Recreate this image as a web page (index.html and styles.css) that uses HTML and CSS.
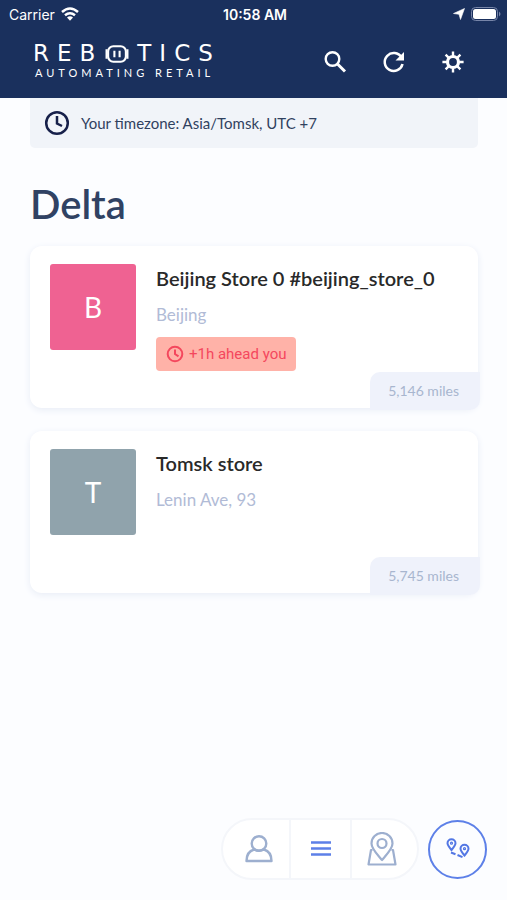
FILE: index.html
```html
<!DOCTYPE html>
<html lang="en">
<head>
<meta charset="utf-8">
<meta name="viewport" content="width=device-width, initial-scale=1">
<title>Rebotics stores</title>
<link rel="stylesheet" href="styles.css">
</head>
<body>
<header class="header">
  <div class="status">
    <div class="status-side">
      <span>Carrier</span>
      <svg width="18" height="14" viewBox="0 0 18 14" fill="none" stroke="#fff" stroke-width="2.5"><path d="M1 5q8-7 16 0M4 8.3q5-4.2 10 0"/><path d="M6 10.5q3-2.6 6 0l-3 3.2z" fill="#fff" stroke="none"/></svg>
    </div>
    <time class="status-time">10:58 AM</time>
    <div class="status-side status-end">
      <svg width="12" height="12" viewBox="0 0 12 12" fill="#fff"><path d="M11.500.5 7.500 11.500 6 6.300.5 5.500z" stroke="#fff" stroke-width=".6"/></svg>
      <svg width="30" height="14" viewBox="0 0 30 14"><rect x=".5" y=".5" width="26" height="13" rx="4" fill="none" stroke="#7785a8"/><rect x="2" y="2" width="23" height="10" rx="2.500" fill="#fff"/><path d="M28 4.500q3 2.500 0 5z" fill="#7785a8"/></svg>
    </div>
  </div>
  <div class="toolbar">
    <div class="logo">
      <div class="wordmark"><span>REB</span><svg width="24" height="18" viewBox="0 0 23 17" fill="none" stroke="#fff" stroke-width="2"><rect x="3" y="1" width="17" height="15" rx="5"/><path d="M1.500 4v9M21.500 4v9M9 5.500v6M14 5.500v6" stroke-width="2"/></svg><span>TICS</span></div>
      <div class="tagline">AUTOMATING RETAIL</div>
    </div>
    <div class="actions">
      <button class="icon-button" aria-label="Search"><svg width="24" height="24" viewBox="0 0 24 24" fill="none" stroke="#fff" stroke-width="2.400"><circle cx="9.500" cy="9" r="6.800"/><path d="m14.500 14 7.500 7.500" stroke-width="3"/></svg></button>
      <button class="icon-button" aria-label="Refresh"><svg width="24" height="24" viewBox="0 0 24 24"><path d="M19.500 7.500A9 9 0 1 0 20.500 14" fill="none" stroke="#fff" stroke-width="2.500"/><path d="M22 2v8.500h-8.500z" fill="#fff"/></svg></button>
      <button class="icon-button" aria-label="Settings"><svg width="24" height="24" viewBox="0 0 24 24" fill="none" stroke="#fff"><circle cx="12" cy="12" r="5.500" stroke-width="3.200"/><path d="M18 12h4.600M1.400 12H6M16.200 16.200l3.200 3.200M4.600 4.600l3.200 3.200M7.800 16.200l-3.200 3.200M19.400 4.600l-3.200 3.200M12 1.400V6M12 18v4.600" stroke-width="2.400"/></svg></button>
    </div>
  </div>
</header>
<main class="content">
  <div class="timezone">
    <svg width="26" height="26" viewBox="0 0 26 26" fill="none" stroke="#17204a" stroke-width="2.500"><circle cx="13" cy="13" r="10.800"/><path d="M13 6v7.500l5 2.500"/></svg>
    <span>Your timezone: Asia/Tomsk, UTC +7</span>
  </div>
  <h1 class="title">Delta</h1>
  <div class="stores">
    <article class="card">
      <div class="avatar avatar-pink">B</div>
      <div class="details">
        <h2 class="name">Beijing Store 0 #beijing_store_0</h2>
        <p class="address">Beijing</p>
        <div class="offset">
          <svg width="18" height="18" viewBox="0 0 18 18" fill="none" stroke="#f4475d" stroke-width="2"><circle cx="9" cy="9" r="7.300"/><path d="M9 4.500V9l3.500 2.300"/></svg>
          <span>+1h ahead you</span>
        </div>
      </div>
      <div class="distance">5,146 miles</div>
    </article>
    <article class="card">
      <div class="avatar avatar-gray">T</div>
      <div class="details">
        <h2 class="name">Tomsk store</h2>
        <p class="address">Lenin Ave, 93</p>
      </div>
      <div class="distance">5,745 miles</div>
    </article>
  </div>
</main>
<footer class="footer">
  <nav class="tabs">
    <button class="tab tab-first" aria-label="Profile"><svg width="30" height="30" viewBox="0 0 30 30" fill="none" stroke="#9dafcf" stroke-width="2.400" stroke-linejoin="round"><circle cx="15" cy="9.500" r="7.300"/><path d="M10 15.500C5 17 2.500 21 2.500 27h25c0-6-2.500-10-7.500-11.500Q15 18 10 15.500"/></svg></button>
    <button class="tab" aria-label="List"><svg width="20" height="18" viewBox="0 0 20 18" stroke="#5d80e8" stroke-width="2.500"><path d="M0 2.500h20M0 8.500h20M0 14.500h20"/></svg></button>
    <button class="tab tab-last" aria-label="Map"><svg width="30" height="34" viewBox="0 0 30 34" fill="none" stroke="#9dafcf" stroke-width="2.200" stroke-linejoin="round"><path d="M15 28C10 22 4.500 17 4.500 11.500a10.500 10.500 0 0 1 21 0C25.500 17 20 22 15 28z"/><circle cx="15" cy="11.500" r="4.500"/><path d="M5.500 18H4L1.500 32.500h27L26 18h-1.500"/></svg></button>
  </nav>
  <button class="route" aria-label="Route"><svg width="24" height="22" viewBox="0 0 24 22" fill="none" stroke="#5377e4" stroke-width="2"><path d="M5.500 12C3 9 1.500 7.200 1.500 5.200a4 4 0 0 1 8 0C9.500 7.200 8 9 5.500 12z"/><circle cx="5.500" cy="5.200" r="1" stroke-width="1.200"/><path d="M18.500 17.500C16 14.500 14.500 12.700 14.500 10.700a4 4 0 0 1 8 0C22.500 12.700 21 14.500 18.500 17.500z"/><circle cx="18.500" cy="10.700" r="1" stroke-width="1.200"/><path d="m5 14.500 4.500 1.700M11.500 17l5 2.200"/></svg></button>
</footer>
</body>
</html>
```

FILE: styles.css
```css
* { box-sizing: border-box; }

body {
  margin: 0;
  min-height: 100vh;
  display: flex;
  flex-direction: column;
  background: #fcfdff;
  font-family: Lato, "Open Sans", sans-serif;
  color: #30415f;
}

h1, h2, p { margin: 0; font-weight: inherit; }

button {
  padding: 0;
  border: 0;
  background: none;
  display: flex;
  align-items: center;
  justify-content: center;
}

svg { display: block; flex: none; }

.header {
  padding-bottom: 12px;
  background: #1a305d;
  color: #fff;
}

.status {
  display: flex;
  align-items: center;
  height: 28px;
  padding: 0 6px 0 9px;
  font-family: Inter, sans-serif;
  font-size: 14px;
}

.status-side {
  flex: 1;
  display: flex;
  align-items: center;
  gap: 6px;
}

.status-end { justify-content: flex-end; }
.status-time { font-weight: 600; }

.toolbar {
  display: flex;
  align-items: center;
  justify-content: space-between;
  height: 58px;
  padding: 0 42px 0 33px;
}

.actions {
  display: flex;
  align-items: center;
  gap: 35px;
  padding-top: 9px;
}

.logo { padding-top: 11px; }

.wordmark {
  display: flex;
  align-items: center;
  gap: 8px;
  height: 21px;
  font-family: "DejaVu Sans", sans-serif;
  font-size: 23px;
  letter-spacing: 8px;
  line-height: 21px;
}

.wordmark span { margin-right: -6px; }

.tagline {
  padding-left: 2px;
  font-size: 11px;
  letter-spacing: 4px;
  line-height: 18px;
}

.content { padding: 0 29px 0 30px; }

.timezone {
  display: flex;
  align-items: center;
  gap: 11px;
  height: 50px;
  padding: 0 14px;
  border-radius: 0 0 5px 5px;
  background: #f1f4f9;
  font-size: 15px;
}

.title {
  padding: 28px 0 14px;
  font-size: 40px;
  font-weight: 600;
  line-height: 56px;
  color: #304263;
}

.stores {
  display: grid;
  gap: 23px;
}

.card {
  position: relative;
  display: flex;
  gap: 20px;
  min-height: 162px;
  padding: 18px 20px;
  border-radius: 12px;
  background: #fff;
  box-shadow: 0 2px 7px #e8edf6;
}

.avatar {
  display: grid;
  place-items: center;
  width: 86px;
  height: 86px;
  flex: none;
  border-radius: 3px;
  color: #fff;
  font-size: 28px;
}

.avatar-pink { background: #ef6292; }
.avatar-gray { background: #90a3ac; }

.name {
  font-size: 20px;
  font-weight: 600;
  line-height: 28px;
  color: #292929;
}

.address {
  padding-top: 10px;
  font-size: 17px;
  line-height: 26px;
  color: #b1bbd6;
}

.offset {
  display: flex;
  align-items: center;
  gap: 5px;
  width: max-content;
  height: 34px;
  margin-top: 9px;
  padding: 0 10px;
  border-radius: 4px;
  background: #ffb2a8;
  color: #f4475d;
  font-family: Roboto, sans-serif;
  font-size: 15px;
}

.distance {
  position: absolute;
  right: -2px;
  bottom: -2px;
  padding: 0 21px 0 18px;
  border-radius: 10px 0 10px 0;
  background: #eff2fb;
  color: #a8b6cf;
  font-size: 14px;
  line-height: 38px;
}

.footer {
  display: flex;
  align-items: center;
  justify-content: flex-end;
  gap: 9px;
  margin-top: auto;
  padding: 16px 20px 20px;
}

.tabs {
  display: flex;
  height: 62px;
  border: 2px solid #f4f6fa;
  border-radius: 31px;
  background: #fff;
}

.tab {
  width: 61px;
  border-right: 2px solid #f4f6fa;
}

.tab-first { width: 68px; padding-left: 6px; }
.tab-last { width: 65px; padding-right: 6px; border-right: 0; }

.route {
  width: 59px;
  height: 59px;
  border: 2px solid #5d80e8;
  border-radius: 50%;
  background: #fcfdff;
}
```
